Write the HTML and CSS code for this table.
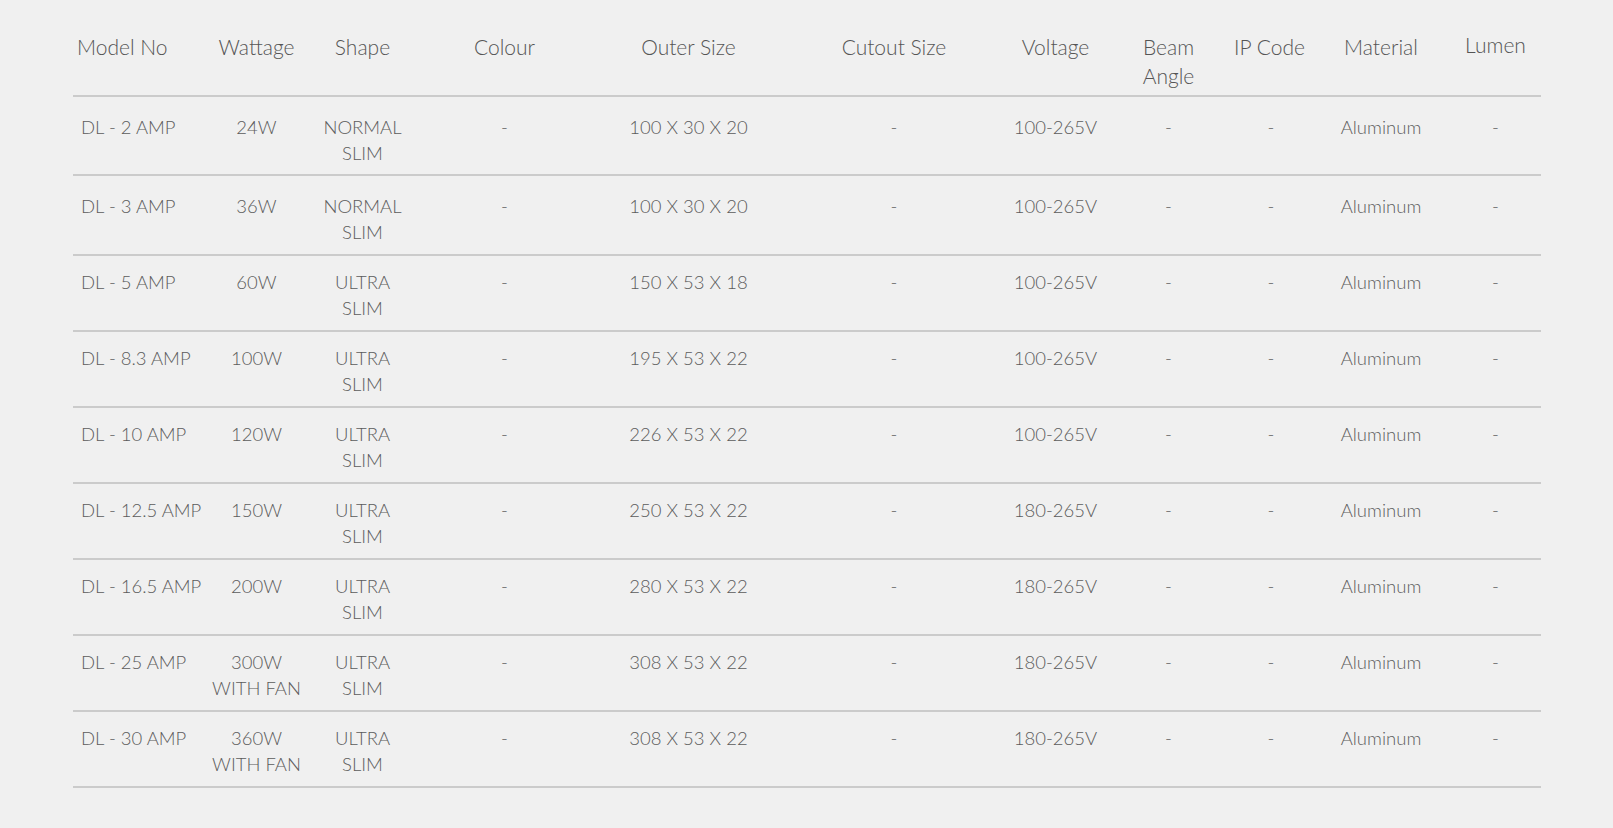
FILE: index.html
```
<!DOCTYPE html>
<html lang="en">
<head>
  <meta charset="UTF-8">
  <title>Downlight Specifications</title>
  <link rel="stylesheet" href="styles.css">
</head>
<body>

  <div class="spec-wrap">
    <table class="spec-table">
      <colgroup>
        <col style="width:131px">
        <col style="width:105px">
        <col style="width:107px">
        <col style="width:177px">
        <col style="width:191px">
        <col style="width:220px">
        <col style="width:103px">
        <col style="width:123px">
        <col style="width:82px">
        <col style="width:138px">
        <col style="width:91px">
      </colgroup>
      <thead>
        <tr>
          <th class="model">Model No</th>
          <th>Wattage</th>
          <th>Shape</th>
          <th>Colour</th>
          <th>Outer Size</th>
          <th>Cutout Size</th>
          <th>Voltage</th>
          <th>Beam<br>Angle</th>
          <th class="ip">IP Code</th>
          <th>Material</th>
          <th class="lumen">Lumen</th>
        </tr>
      </thead>
      <tbody>
        <tr class="normal">
          <td class="model">DL - 2 AMP</td>
          <td>24W</td>
          <td>NORMAL SLIM</td>
          <td>-</td>
          <td>100 X 30 X 20</td>
          <td>-</td>
          <td>100-265V</td>
          <td>-</td>
          <td>-</td>
          <td>Aluminum</td>
          <td>-</td>
        </tr>
        <tr class="normal">
          <td class="model">DL - 3 AMP</td>
          <td>36W</td>
          <td>NORMAL SLIM</td>
          <td>-</td>
          <td>100 X 30 X 20</td>
          <td>-</td>
          <td>100-265V</td>
          <td>-</td>
          <td>-</td>
          <td>Aluminum</td>
          <td>-</td>
        </tr>
        <tr>
          <td class="model">DL - 5 AMP</td>
          <td>60W</td>
          <td>ULTRA SLIM</td>
          <td>-</td>
          <td>150 X 53 X 18</td>
          <td>-</td>
          <td>100-265V</td>
          <td>-</td>
          <td>-</td>
          <td>Aluminum</td>
          <td>-</td>
        </tr>
        <tr>
          <td class="model">DL - 8.3 AMP</td>
          <td>100W</td>
          <td>ULTRA SLIM</td>
          <td>-</td>
          <td>195 X 53 X 22</td>
          <td>-</td>
          <td>100-265V</td>
          <td>-</td>
          <td>-</td>
          <td>Aluminum</td>
          <td>-</td>
        </tr>
        <tr>
          <td class="model">DL - 10 AMP</td>
          <td>120W</td>
          <td>ULTRA SLIM</td>
          <td>-</td>
          <td>226 X 53 X 22</td>
          <td>-</td>
          <td>100-265V</td>
          <td>-</td>
          <td>-</td>
          <td>Aluminum</td>
          <td>-</td>
        </tr>
        <tr>
          <td class="model">DL - 12.5 AMP</td>
          <td>150W</td>
          <td>ULTRA SLIM</td>
          <td>-</td>
          <td>250 X 53 X 22</td>
          <td>-</td>
          <td>180-265V</td>
          <td>-</td>
          <td>-</td>
          <td>Aluminum</td>
          <td>-</td>
        </tr>
        <tr>
          <td class="model">DL - 16.5 AMP</td>
          <td>200W</td>
          <td>ULTRA SLIM</td>
          <td>-</td>
          <td>280 X 53 X 22</td>
          <td>-</td>
          <td>180-265V</td>
          <td>-</td>
          <td>-</td>
          <td>Aluminum</td>
          <td>-</td>
        </tr>
        <tr>
          <td class="model">DL - 25 AMP</td>
          <td>300W<br>WITH FAN</td>
          <td>ULTRA SLIM</td>
          <td>-</td>
          <td>308 X 53 X 22</td>
          <td>-</td>
          <td>180-265V</td>
          <td>-</td>
          <td>-</td>
          <td>Aluminum</td>
          <td>-</td>
        </tr>
        <tr>
          <td class="model">DL - 30 AMP</td>
          <td>360W<br>WITH FAN</td>
          <td>ULTRA SLIM</td>
          <td>-</td>
          <td>308 X 53 X 22</td>
          <td>-</td>
          <td>180-265V</td>
          <td>-</td>
          <td>-</td>
          <td>Aluminum</td>
          <td>-</td>
        </tr>
      </tbody>
    </table>
  </div>

</body>
</html>
```

FILE: styles.css
```
body {
  margin: 0;
  background: #f0f0f0;
  font-family: Lato, 'Open Sans', sans-serif;
  font-weight: 300;
  color: #555;
}

.spec-wrap {
  padding: 20px 0 40px 73px;
}

.spec-table {
  width: 1468px;
  table-layout: fixed;
  border-collapse: collapse;
}

.spec-table th {
  font-weight: 300;
  font-size: 21px;
  line-height: 29px;
  color: #555;
  text-align: center;
  vertical-align: top;
  white-space: nowrap;
  padding: 12px 4px 5px;
  border-bottom: 2px solid #cbcbcb;
}

.spec-table td {
  font-size: 18.5px;
  line-height: 26px;
  color: #5c5c5c;
  text-align: center;
  vertical-align: top;
  padding: 13.5px 8px 8.5px;
  border-bottom: 2px solid #cbcbcb;
}

.spec-table tr.normal td {
  padding-top: 16.8px;
}

.spec-table th.model {
  text-align: left;
  padding-left: 4px;
}

.spec-table td.model {
  text-align: left;
  white-space: nowrap;
  padding-left: 8px;
}

.spec-table th.ip {
  padding-right: 16px;
}

.spec-table th.lumen {
  padding-top: 10px;
}
```
